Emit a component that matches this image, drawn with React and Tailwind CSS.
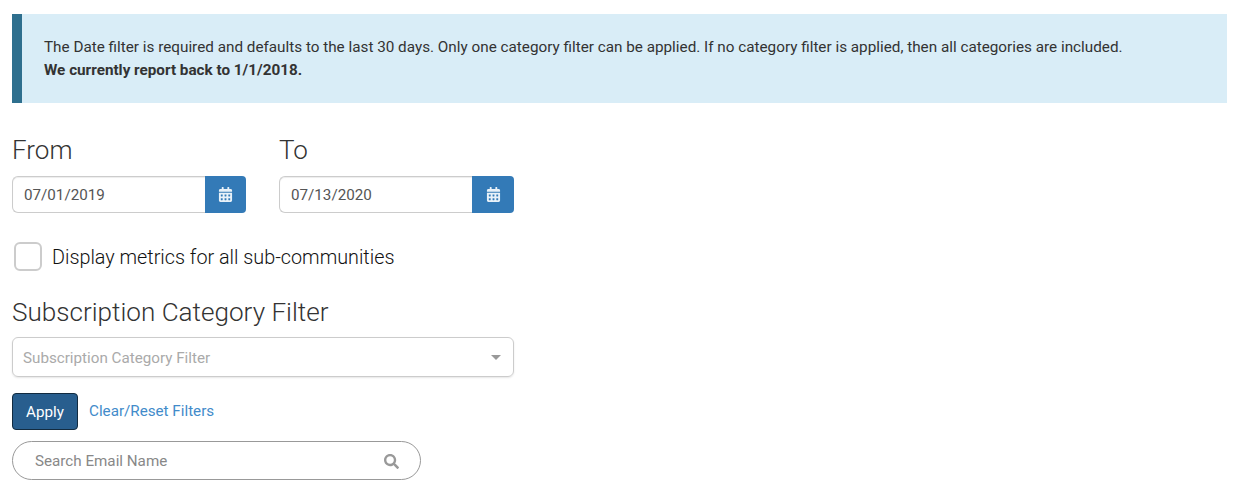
import React from "react";
import { FaCalendarAlt, FaSearch } from "react-icons/fa";

function DateField({ label, value, width, buttonWidth }) {
  return (
    <div className={width}>
      <div className="text-[26px] font-light leading-[36px] text-[#333]">{label}</div>
      <div className="mt-[8px] flex h-[37px]">
        <div className="flex flex-1 items-center rounded-l-[6px] border border-r-0 border-[#ccc] pl-[11px] pt-[1px] text-[15.2px] text-[#555] shadow-[inset_0_1px_1px_rgba(0,0,0,0.075)]">
          {value}
        </div>
        <div className={`flex ${buttonWidth} items-center justify-center rounded-r-[4px] bg-[#337ab7] text-[15px] text-[#e8f1f8]`}>
          <FaCalendarAlt />
        </div>
      </div>
    </div>
  );
}

export default function App() {
  return (
    <div className="bg-white px-[12px] pt-[14px] font-['Roboto',sans-serif] text-[15.2px] text-[#333]">
      <div className="h-[89px] w-[1215px] border-l-[10px] border-[#2e6f8e] bg-[#d9edf7] pl-[22px] pt-[22px] leading-[23px]">
        <div className="text-[15.28px]">The Date filter is required and defaults to the last 30 days. Only one category filter can be applied. If no category filter is applied, then all categories are included.</div>
        <div className="text-[15.26px] font-bold">We currently report back to 1/1/2018.</div>
      </div>

      <div className="mt-[29px] flex gap-[33px]">
        <DateField label="From" value="07/01/2019" width="w-[234px]" buttonWidth="w-[41px]" />
        <DateField label="To" value="07/13/2020" width="w-[235px]" buttonWidth="w-[42px]" />
      </div>

      <div className="mt-[29px] flex h-[29px] items-start pl-[2px]">
        <div className="h-[29px] w-[28px] rounded-[6px] border-2 border-[#ccc]" />
        <span className="ml-[10px] pt-[2px] text-[19.8px] font-light leading-[27px] text-[#111]">Display metrics for all sub-communities</span>
      </div>

      <div className="mt-[23px] text-[26.1px] font-light leading-[36px] text-[#333]">Subscription Category Filter</div>

      <div className="mt-[7px] flex h-[40px] w-[502px] items-center justify-between rounded-[6px] border border-[#ccc] pl-[10px] pr-[12px] shadow-[0_1px_2px_rgba(0,0,0,0.1)]">
        <span className="pt-[2px] text-[15.2px] text-[#aaa]">Subscription Category Filter</span>
        <span className="h-0 w-0 border-x-[5px] border-t-[5px] border-x-transparent border-t-[#999]" />
      </div>

      <div className="mt-[16px] flex items-center">
        <button className="h-[37px] w-[66px] rounded-[4px] border border-[#122b40] bg-[#285e8e] pt-[1px] text-[15.2px] text-white">Apply</button>
        <a className="ml-[11px] text-[15.2px] text-[#428bca]">Clear/Reset Filters</a>
      </div>

      <div className="mt-[11px] flex h-[39px] w-[409px] items-center justify-between rounded-full border border-[#999] pl-[22px] pr-[21px] pt-[1px]">
        <span className="text-[15.2px] text-[#888]">Search Email Name</span>
        <FaSearch className="text-[15px] text-[#999]" />
      </div>
    </div>
  );
}
